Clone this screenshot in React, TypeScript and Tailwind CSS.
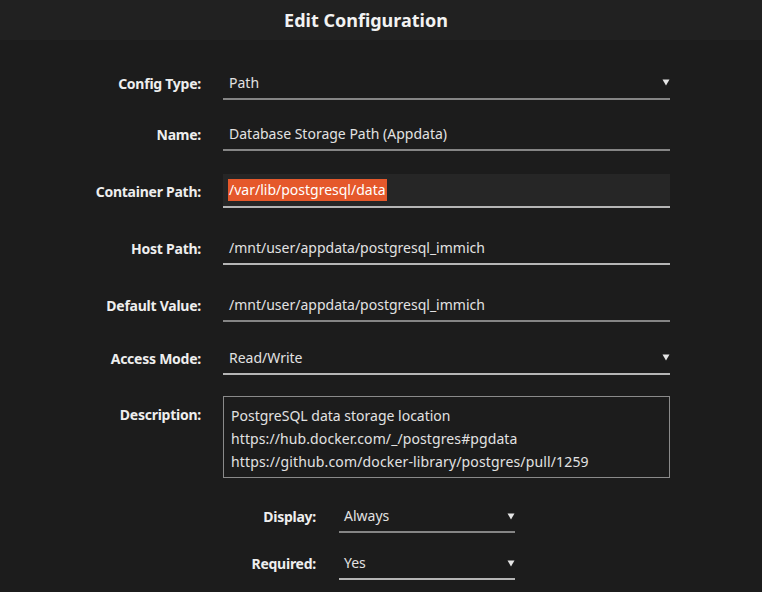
import React from 'react';

const font = { fontFamily: '"Noto Sans", "Open Sans", sans-serif' };

function Arrow() {
  return (
    <svg width="8" height="8" viewBox="0 0 8 8" className="absolute right-0 top-1/2 -translate-y-1/2">
      <path d="M0.5 1.5 H7.5 L4 7.5 Z" fill="#e4e4e4" />
    </svg>
  );
}

function Field({ value, select, light }: { value: string; select?: boolean; light?: boolean }) {
  return (
    <div
      className={`relative h-[34px] flex items-center pl-[6px] text-[14px] text-[#e2e2e2] border-b-2 ${
        light ? 'border-[#b5b5b5]' : 'border-[#858585]'
      }`}
    >
      {value}
      {select && <Arrow />}
    </div>
  );
}

function Row({ label, mt, children }: { label: string; mt: string; children: React.ReactNode }) {
  return (
    <div className={`flex items-center ${mt}`}>
      <div className="w-[201px] text-right text-[14px] font-bold tracking-[-0.25px] text-[#eeeeee]">{label}</div>
      <div className="w-[447px] ml-[22px]">{children}</div>
    </div>
  );
}

export default function App() {
  return (
    <div className="w-[762px] h-[592px] bg-[#1c1c1c] overflow-hidden" style={font}>
      <div className="h-[40px] bg-[#212121] flex items-center justify-center">
        <h1 className="text-[18px] font-bold text-[#f2f2f2] -ml-[30px]">Edit Configuration</h1>
      </div>

      <div className="flex flex-col">
        <Row label="Config Type:" mt="mt-[26px]">
          <Field value="Path" select />
        </Row>
        <Row label="Name:" mt="mt-[17px]">
          <Field value="Database Storage Path (Appdata)" />
        </Row>
        <Row label="Container Path:" mt="mt-[23px]">
          <div className="h-[34px] flex items-center pl-[5px] bg-[#262626] border-b-2 border-[#b5b5b5] text-[14px]">
            <span className="bg-[#e5582b] text-white px-[1px] leading-[22px]">/var/lib/postgresql/data</span>
          </div>
        </Row>
        <Row label="Host Path:" mt="mt-[23px]">
          <Field value="/mnt/user/appdata/postgresql_immich" light />
        </Row>
        <Row label="Default Value:" mt="mt-[23px]">
          <Field value="/mnt/user/appdata/postgresql_immich" />
        </Row>
        <Row label="Access Mode:" mt="mt-[19px]">
          <Field value="Read/Write" select light />
        </Row>

        <div className="flex items-start mt-[21px]">
          <div className="w-[201px] text-right text-[14px] font-bold tracking-[-0.25px] text-[#eeeeee] pt-[8px]">Description:</div>
          <div className="w-[447px] h-[82px] ml-[22px] border border-[#8a8a8a] px-[7px] pt-[7px] text-[14px] leading-[23px] text-[#e2e2e2]">
            <div>PostgreSQL data storage location</div>
            <div className="tracking-[0.1px]">https://hub.docker.com/_/postgres#pgdata</div>
            <div className="tracking-[0.15px]">https://github.com/docker-library/postgres/pull/1259</div>
          </div>
        </div>

        <div className="flex items-center mt-[22px]">
          <div className="w-[316px] text-right text-[14px] font-bold tracking-[-0.25px] text-[#eeeeee]">Display:</div>
          <div className="w-[176px] ml-[23px]">
            <div className="relative h-[33px] flex items-center pl-[5px] text-[14px] text-[#e2e2e2] border-b-2 border-[#858585]">
              Always
              <Arrow />
            </div>
          </div>
        </div>
        <div className="flex items-center mt-[14px]">
          <div className="w-[316px] text-right text-[14px] font-bold tracking-[-0.25px] text-[#eeeeee]">Required:</div>
          <div className="w-[176px] ml-[23px]">
            <div className="relative h-[33px] flex items-center pl-[5px] text-[14px] text-[#e2e2e2] border-b-2 border-[#b5b5b5]">
              Yes
              <Arrow />
            </div>
          </div>
        </div>
      </div>
    </div>
  );
}
